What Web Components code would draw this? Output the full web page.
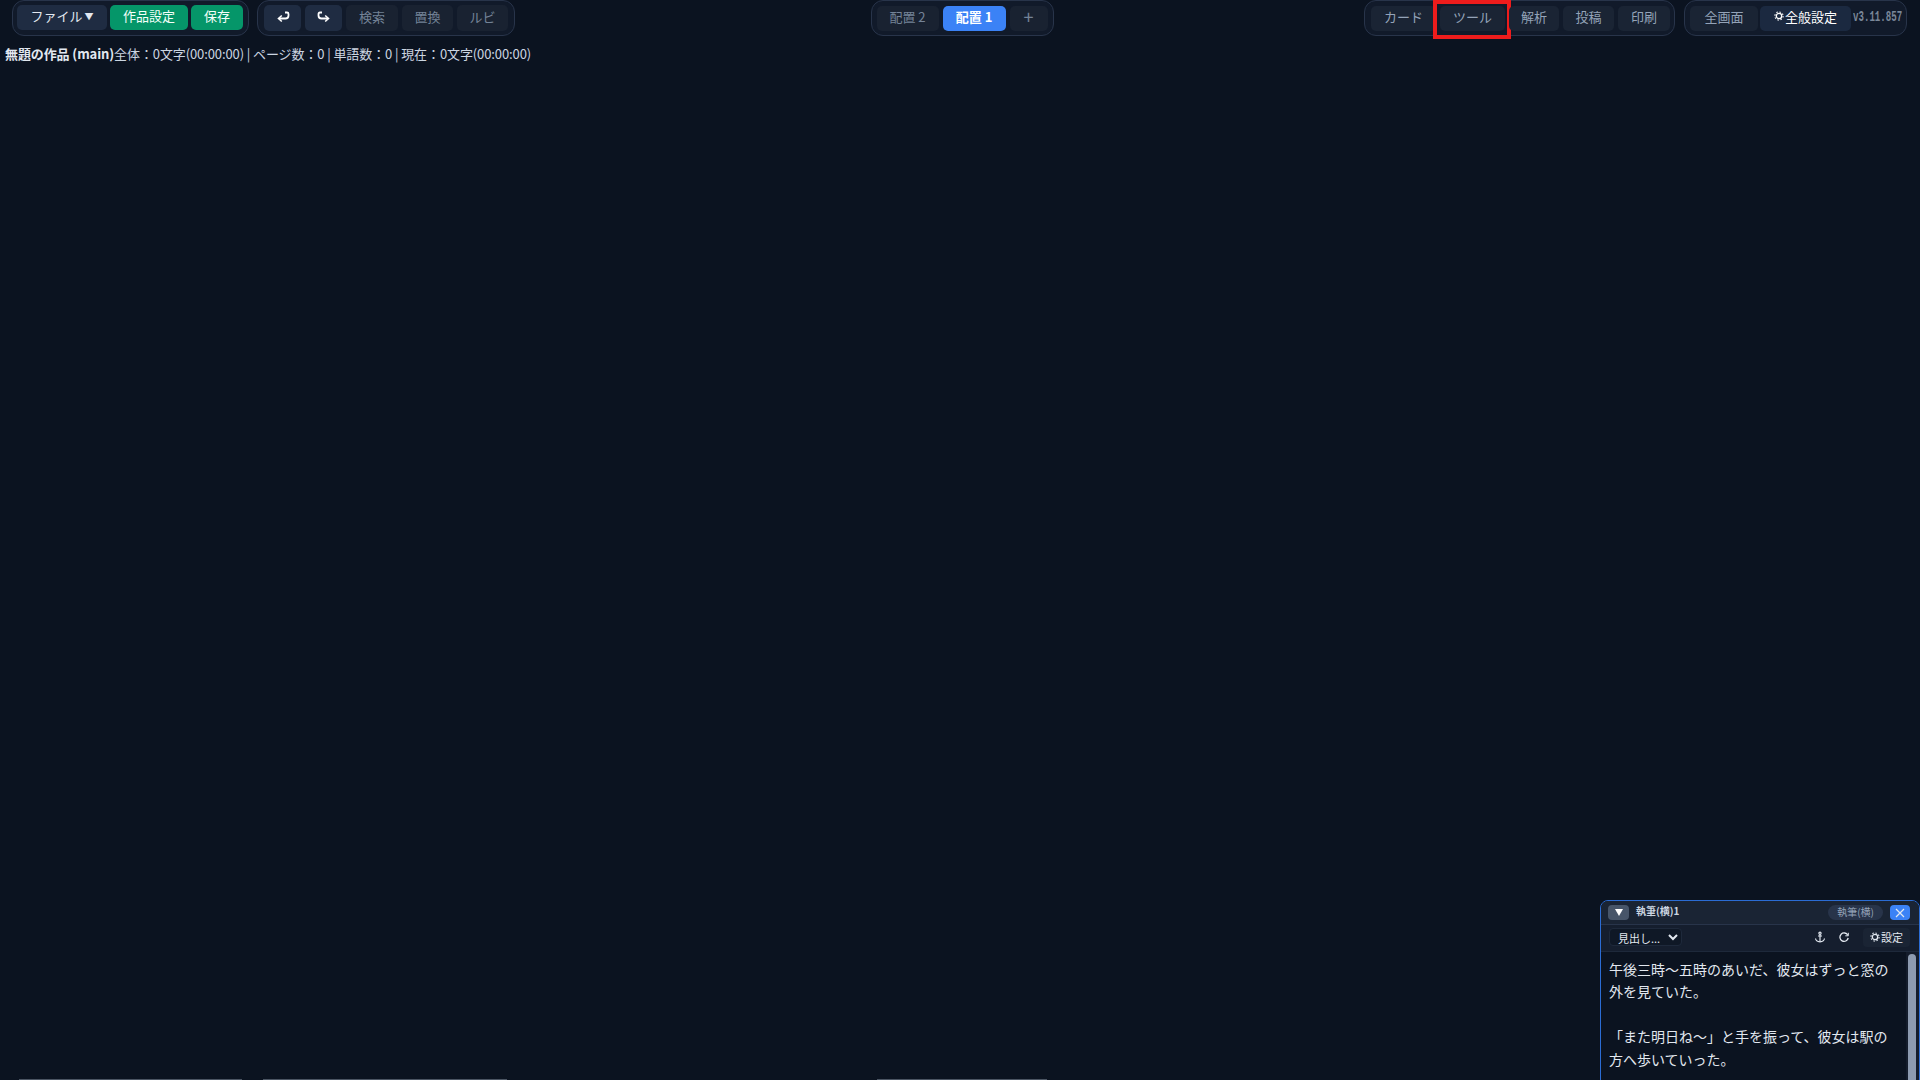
<!DOCTYPE html>
<html lang="ja">
<head>
<meta charset="utf-8">
<title>無題の作品</title>
<style>
  html, body { margin: 0; height: 100%; overflow: hidden; background: #0b1320; }
  body { font-family: "Noto Sans CJK JP", "Noto Sans", sans-serif; color: #e2e8f0; }
</style>
</head>
<body>
<app-shell>
  <tool-group slot="left" style="gap:3px;padding:0 5px 2px 4px">
    <tool-button kind="menu" w="90">ファイル<span style="font-size:9px;margin:2px 0 0 2px">▼</span></tool-button>
    <tool-button kind="green" w="78">作品設定</tool-button>
    <tool-button kind="green" w="52">保存</tool-button>
  </tool-group>
  <tool-group slot="left" style="padding:0 6px">
    <tool-button kind="menu" tall w="37"><svg width="14" height="12" viewBox="0 0 14 12" fill="none" stroke="#fff" stroke-width="1.8"><path d="M9 1.500h2q1.500 0 1.500 1.500v1.500q0 3-3 3H3"/><path d="M5.800 4.500 2.500 7.500l3.300 3" stroke-width="1.600"/></svg></tool-button>
    <tool-button kind="menu" tall w="37"><svg width="14" height="12" viewBox="0 0 14 12" fill="none" stroke="#fff" stroke-width="1.8"><path d="M5 1.500H3Q1.500 1.500 1.500 3v1.500q0 3 3 3H11"/><path d="M8.200 4.500l3.300 3-3.300 3" stroke-width="1.600"/></svg></tool-button>
    <tool-button kind="dim" tall w="52">検索</tool-button>
    <tool-button kind="dim" tall w="51">置換</tool-button>
    <tool-button kind="dim" tall w="51">ルビ</tool-button>
  </tool-group>

  <tool-group slot="center">
    <tool-button kind="dim" w="62">配置 2</tool-button>
    <tool-button kind="blue" w="63">配置 1</tool-button>
    <tool-button kind="dim" w="38" big>+</tool-button>
  </tool-group>

  <tool-group slot="right" style="padding:0 4px 0 6px">
    <tool-button w="65">カード</tool-button>
    <tool-button w="65" marked>ツール</tool-button>
    <tool-button w="50">解析</tool-button>
    <tool-button w="51">投稿</tool-button>
    <tool-button w="52">印刷</tool-button>
  </tool-group>
  <tool-group slot="right" style="gap:2px;padding:0 3px 0 5px">
    <tool-button w="68">全画面</tool-button>
    <tool-button kind="plain" w="91"><gear-icon></gear-icon>全般設定</tool-button>
    <version-tag>v3.11.857</version-tag>
  </tool-group>

  <stats-line slot="stats" title-text="無題の作品 (main)">全体：0文字(00:00:00) | ページ数：0 | 単語数：0 | 現在：0文字(00:00:00)</stats-line>

  <dock-stub slot="dock" w="223" x="19"></dock-stub>
  <dock-stub slot="dock" w="244" x="21"></dock-stub>
  <dock-stub slot="dock" w="170" x="370"></dock-stub>

  <float-panel slot="float" heading="執筆(横)1" badge="執筆(横)"><p>午後三時〜五時のあいだ、彼女はずっと窓の外を見ていた。</p><p>「また明日ね〜」と手を振って、彼女は駅の方へ歩いていった。</p></float-panel>
</app-shell>

<script>
class AppShell extends HTMLElement {
  constructor() {
    super();
    this.attachShadow({mode: 'open'}).innerHTML = `
    <style>
      :host { display: grid; grid-template-rows: 38px 1fr 1px; height: 100vh; position: relative; overflow: hidden; }
      .bar { display: grid; grid-template-columns: 1fr auto 1fr; padding: 0 13px 0 12px; }
      .side { display: flex; gap: 8px; }
      .mid { margin-left: 5px; }
      .end { justify-content: flex-end; gap: 9px; }
      .info { padding: 6px 5px; }
      .dock { display: flex; }
    </style>
    <div class="bar">
      <div class="side"><slot name="left"></slot></div>
      <div class="side mid"><slot name="center"></slot></div>
      <div class="side end"><slot name="right"></slot></div>
    </div>
    <div class="info"><slot name="stats"></slot></div>
    <div class="dock"><slot name="dock"></slot></div>
    <slot name="float"></slot>
    `;
  }
}

class ToolGroup extends HTMLElement {
  constructor() {
    super();
    this.attachShadow({mode: 'open'}).innerHTML = `
    <style>
      :host {
        display: flex; align-items: center; gap: 4px;
        height: 36px; box-sizing: border-box; padding: 0 5px;
        background: #111a2a; border: 1px solid #28344a; border-radius: 12px;
      }
    </style>
    <slot></slot>
    `;
  }
}

class ToolButton extends HTMLElement {
  constructor() {
    super();
    this.attachShadow({mode: 'open'}).innerHTML = `
    <style>
      :host {
        display: flex; position: relative; align-items: center; justify-content: center;
        height: 25px; box-sizing: border-box; padding-bottom: 4px; border-radius: 5px; flex: none;
        font-size: 13px; color: #94a3b8; background: #1a2434;
        white-space: nowrap;
      }
      :host([tall]) { height: 26px; padding-bottom: 3px; }
      :host([kind="menu"]) { background: #1f2c42; color: #e2e8f0; }
      :host([kind="dim"]) { background: #192231; color: #748397; }
      :host([kind="green"]) { background: #059669; color: #f4fffa; }
      :host([kind="blue"]) { background: #3b82f6; color: #fff; font-weight: 700; }
      :host([kind="plain"]) { background: #1b2940; color: #fff; }
      :host([big]) { font-size: 18px; }
      :host([marked])::after {
        content: ""; position: absolute; top: -6px; bottom: -8px; left: -7px; right: -6px;
        border: 4px solid #ee1c1c; pointer-events: none;
      }
    </style>
    <slot></slot>
    `;
    this.style.width = this.getAttribute('w') + 'px';
  }
}

class GearIcon extends HTMLElement {
  constructor() {
    super();
    this.attachShadow({mode: 'open'}).innerHTML = `
    <style>
      :host { display: inline-flex; margin-right: 1px; }
    </style>
    <svg width="10" height="10" viewBox="0 0 10 10" fill="none" stroke="currentColor">
      <circle cx="5" cy="5" r="2.700" stroke-width="1.300"/>
      <circle cx="5" cy="5" r="4.100" stroke-width="1.100" stroke-dasharray="1.500 1.720"/>
    </svg>
    `;
  }
}

class VersionTag extends HTMLElement {
  constructor() {
    super();
    this.attachShadow({mode: 'open'}).innerHTML = `
    <style>
      :host {
        display: block; width: 50px; padding-bottom: 2px; white-space: nowrap;
        font: 700 14px "Liberation Mono", monospace; color: #7a8799;
        transform: scaleX(.65); transform-origin: left center;
      }
    </style>
    <slot></slot>
    `;
  }
}

class StatsLine extends HTMLElement {
  constructor() {
    super();
    this.attachShadow({mode: 'open'}).innerHTML = `
    <style>
      :host { display: block; font-size: 13px; line-height: 19px; color: #cbd5e1; letter-spacing: -.1px; }
      b { color: #e2e8f0; font-weight: 700; }
    </style>
    <b></b><slot></slot>
    `;
    this.shadowRoot.querySelector('b').textContent = this.getAttribute('title-text');
  }
}

class DockStub extends HTMLElement {
  constructor() {
    super();
    this.attachShadow({mode: 'open'}).innerHTML = `
    <style>
      :host { display: block; height: 1px; background: #4b5563; flex: none; }
    </style>
    `;
    this.style.width = this.getAttribute('w') + 'px';
    this.style.marginLeft = this.getAttribute('x') + 'px';
  }
}

class FloatPanel extends HTMLElement {
  constructor() {
    super();
    this.attachShadow({mode: 'open'}).innerHTML = `
    <style>
      :host {
        position: absolute; left: 1600px; top: 900px; width: 320px; height: 400px;
        box-sizing: border-box; display: flex; flex-direction: column;
        background: #0b1320; border: 1px solid #2b6cd4; border-radius: 8px; overflow: hidden;
      }
      .head {
        display: flex; align-items: center; gap: 7px; height: 23px; padding: 0 9px 0 7px; flex: none;
        background: #1a2434; border-bottom: 1px solid #28344a;
      }
      .toggle { width: 21px; height: 15px; border-radius: 4px; background: #475569; display: flex; align-items: center; justify-content: center; }
      .toggle i { width: 0; height: 0; border-style: solid; border-color: #fff transparent transparent; border-width: 7px 4.500px 0; }
      .title { flex: 1; font-size: 10px; font-weight: 700; color: #cbd5e1; padding-bottom: 4px; }
      .badge { font-size: 10px; color: #94a3b8; background: #28344a; border-radius: 8px; padding: 0 9px 2px; line-height: 13px; }
      .close { width: 20px; height: 15px; border-radius: 4px; background: #3b82f6; display: flex; align-items: center; justify-content: center; }
      .tools {
        display: flex; align-items: center; height: 27px; box-sizing: border-box; padding: 0 9px 2px 8px; flex: none;
        background: #151e2e; border-bottom: 1px solid #1e293b;
      }
      select {
        width: 73px; height: 18px; box-sizing: border-box; padding: 0 0 0 4px;
        font: 11px "Noto Sans CJK JP", sans-serif; color: #e2e8f0;
        background: #0f1826; border: 1px solid #1e293b; border-radius: 4px; outline: none;
      }
      .glyph { margin-left: 12px; width: 12px; height: 12px; display: block; }
      .first { margin-left: auto; }
      .set { margin-left: 13px; width: 47px; height: 19px; box-sizing: border-box; padding-bottom: 1px; border-radius: 4px; background: #1a2434; color: #e2e8f0; font-size: 11px; display: flex; align-items: center; justify-content: center; white-space: nowrap; }
      .main { flex: 1; display: flex; min-height: 0; }
      .body {
        flex: 1; overflow: hidden; box-sizing: border-box; padding: 6px 12px 0 8px;
        font-size: 14px; line-height: 22.400px; color: #e2e8f0;
      }
      ::slotted(p) { margin: 0 0 22.400px; }
      .track { width: 13px; flex: none; background: #141c2b; padding: 2px 3px 0 2px; box-sizing: border-box; }
      .thumb { height: 260px; background: #8d9bb0; border-radius: 4px; }
    </style>
    <div class="head">
      <div class="toggle"><i></i></div>
      <div class="title"></div>
      <div class="badge"></div>
      <div class="close"><svg width="10" height="10" viewBox="0 0 10 10" stroke="#e2e8f0" stroke-width="1.200"><path d="M1 1l8 8M9 1l-8 8"/></svg></div>
    </div>
    <div class="tools">
      <select><option>見出し...</option></select>
      <svg class="glyph first" viewBox="0 0 12 12" fill="none" stroke="#e2e8f0" stroke-width="1.200"><circle cx="6" cy="2.200" r="1.100"/><path d="M6 3.300V10.800M4 5h4"/><path d="M1.500 7.500Q2 10.500 6 10.800Q10 10.500 10.500 7.500"/></svg>
      <svg class="glyph" viewBox="0 0 12 12" fill="none" stroke="#e2e8f0" stroke-width="1.300"><path d="M9.800 4.200A4.200 4.200 0 1 0 10.200 7"/><path d="M10.300 1.800v3H7.300" stroke-width="1"/></svg>
      <span class="set"><gear-icon></gear-icon>設定</span>
    </div>
    <div class="main">
      <div class="body"><slot></slot></div>
      <div class="track"><div class="thumb"></div></div>
    </div>
    `;
    this.shadowRoot.querySelector('.title').textContent = this.getAttribute('heading');
    this.shadowRoot.querySelector('.badge').textContent = this.getAttribute('badge');
  }
}

customElements.define('app-shell', AppShell);
customElements.define('tool-group', ToolGroup);
customElements.define('tool-button', ToolButton);
customElements.define('gear-icon', GearIcon);
customElements.define('version-tag', VersionTag);
customElements.define('stats-line', StatsLine);
customElements.define('dock-stub', DockStub);
customElements.define('float-panel', FloatPanel);
</script>
</body>
</html>
